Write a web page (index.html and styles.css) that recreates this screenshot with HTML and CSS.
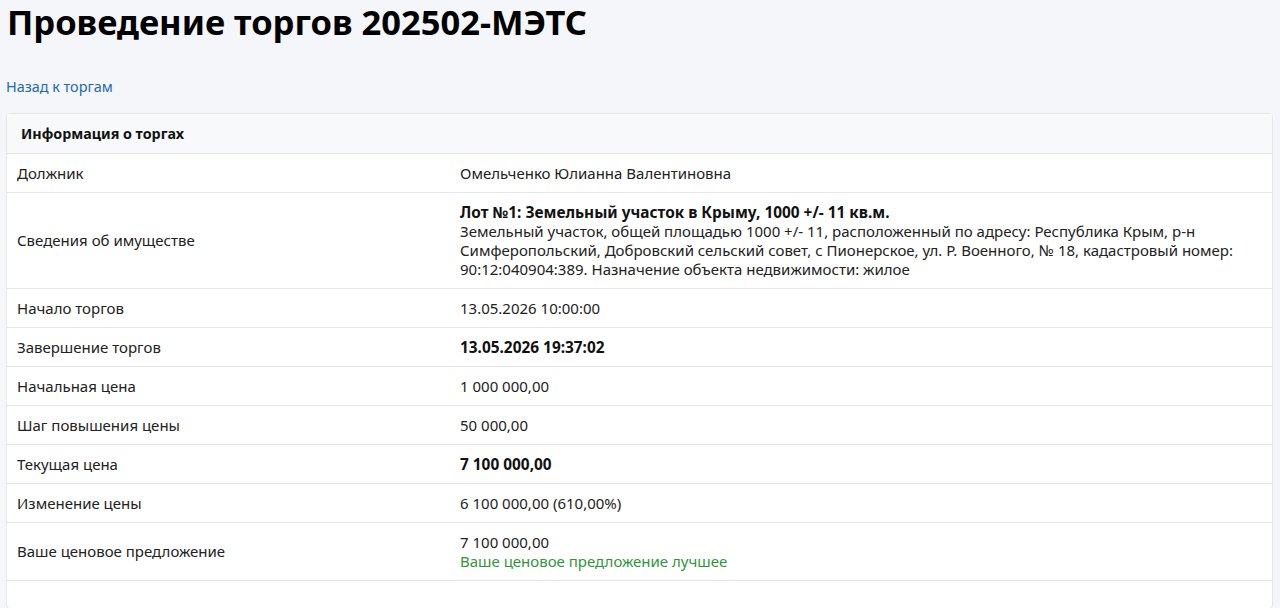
FILE: index.html
```html
<!DOCTYPE html>
<html lang="ru">
<head>
<meta charset="utf-8">
<title>Проведение торгов 202502-МЭТС</title>
<link rel="stylesheet" href="styles.css">
</head>
<body>
<h1 class="title">Проведение торгов 202502-МЭТС</h1>
<a class="back" href="#">Назад к торгам</a>
<div class="card">
  <div class="card-header">Информация о торгах</div>
  <table class="info">
    <tr><td class="k">Должник</td><td class="v">Омельченко Юлианна Валентиновна</td></tr>
    <tr><td class="k">Сведения об имуществе</td><td class="v"><b>Лот №1: Земельный участок в Крыму, 1000 +/- 11 кв.м.</b><br>Земельный участок, общей площадью 1000 +/- 11, расположенный по адресу: Республика Крым, р-н<br>Симферопольский, Добровский сельский совет, с Пионерское, ул. Р. Военного, № 18, кадастровый номер:<br>90:12:040904:389. Назначение объекта недвижимости: жилое</td></tr>
    <tr><td class="k">Начало торгов</td><td class="v">13.05.2026 10:00:00</td></tr>
    <tr><td class="k">Завершение торгов</td><td class="v"><b>13.05.2026 19:37:02</b></td></tr>
    <tr><td class="k">Начальная цена</td><td class="v">1 000 000,00</td></tr>
    <tr><td class="k">Шаг повышения цены</td><td class="v">50 000,00</td></tr>
    <tr><td class="k">Текущая цена</td><td class="v"><b>7 100 000,00</b></td></tr>
    <tr><td class="k">Изменение цены</td><td class="v">6 100 000,00 (610,00%)</td></tr>
    <tr><td class="k">Ваше ценовое предложение</td><td class="v">7 100 000,00<br><span class="ok">Ваше ценовое предложение лучшее</span></td></tr>
  </table>
  <div class="card-foot"></div>
</div>
</body>
</html>
```
FILE: styles.css
```css
html, body {
  margin: 0;
  padding: 0;
  background: #f5f6fa;
}
body {
  padding: 0 7px 0 6px;
  font-family: "Noto Sans", "Open Sans", sans-serif;
  font-size: 15px;
  color: #212529;
}
.title {
  margin: -2px 0 0 1px;
  font-size: 34.5px;
  line-height: 48px;
  font-weight: 700;
  color: #000;
}
.back {
  display: block;
  margin-top: 31px;
  line-height: 20px;
  font-size: 14.4px;
  color: #2168b5;
  text-decoration: none;
}
.card {
  margin-top: 16px;
  background: #fff;
  border: 1px solid #e6e7ea;
  border-radius: 4px;
}
.card-header {
  background: #f8f9fa;
  border-bottom: 1px solid #e3e4e6;
  padding: 10px 14px;
  font-weight: 700;
  font-size: 14.3px;
  line-height: 19px;
  color: #111;
}
.info {
  width: 100%;
  border-collapse: collapse;
}
.info td {
  padding: 9.5px 10px;
  line-height: 19px;
  border-bottom: 1px solid #e6e7ea;
  vertical-align: middle;
  color: #222;
}
.info td.k {
  width: 423px;
}
.info b {
  font-weight: 700;
  font-size: 15.4px;
  color: #111;
}
.ok {
  color: #2f963a;
}
.card-foot {
  height: 27px;
}
```
